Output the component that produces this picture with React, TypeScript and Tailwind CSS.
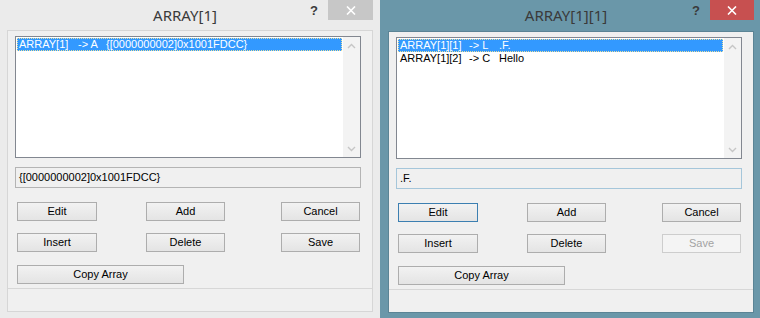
import React from 'react';

type Item = { name: string; kind: string; value: string };

type WinProps = {
  title: string;
  active?: boolean;
  items: Item[];
  field: string;
  nameW: string;
  kindW: string;
};

function Chevron({ up }: { up?: boolean }) {
  return (
    <svg width="9" height="6" viewBox="0 0 9 6" className="block">
      <polyline
        points={up ? '1,5 4.5,1.5 8,5' : '1,1 4.5,4.5 8,1'}
        fill="none"
        stroke="#c6c6c6"
        strokeWidth="1.4"
      />
    </svg>
  );
}

function Btn({
  label,
  className,
  isDefault,
  disabled,
}: {
  label: string;
  className: string;
  isDefault?: boolean;
  disabled?: boolean;
}) {
  const tone = disabled
    ? 'border-[#cdcdcd] bg-[#f4f4f4] text-[#a3a3a3]'
    : isDefault
      ? 'border-[#3c7fb1] bg-linear-to-b from-[#f2f2f2] to-[#e4e4e4] text-black'
      : 'border-[#adadad] bg-linear-to-b from-[#f2f2f2] to-[#e4e4e4] text-black';
  return (
    <div
      className={`h-[19px] shrink-0 flex items-center justify-center border text-[11px] leading-none ${tone} ${className}`}
    >
      {label}
    </div>
  );
}

function Win({ title, active, items, field, nameW, kindW }: WinProps) {
  return (
    <div
      className={
        active
          ? 'w-[380px] h-[318px] bg-[#6a97a9] flex flex-col pl-[8px] pr-[6px]'
          : 'w-[380px] h-[318px] bg-[#ebebeb] flex flex-col pl-[7px] pr-[7px]'
      }
    >
      {/* title bar */}
      <div
        className={
          active
            ? 'h-[31px] grid grid-cols-[1fr_auto_1fr] items-start'
            : 'h-[30px] grid grid-cols-[1fr_auto_1fr] items-start'
        }
      >
        <div />
        <div className="pt-[5px] pr-[10px] text-[15px] leading-[20px] text-[#3a3a3a] font-['Noto_Sans',sans-serif]">
          {title}
        </div>
        <div className="flex justify-end items-start">
          <span className="mt-[3px] mr-[10px] text-[13px] leading-[16px] font-bold text-[#3a3a3a] font-['Liberation_Sans',Arial,sans-serif]">
            ?
          </span>
          <div
            className={
              active
                ? 'w-[44px] h-[20px] bg-[#c75050] flex items-center justify-center'
                : 'w-[45px] h-[20px] bg-[#c7c7c7] flex items-center justify-center'
            }
          >
            <svg width="10" height="9" viewBox="0 0 10 9">
              <path d="M1 0.5 L9 8.5 M9 0.5 L1 8.5" stroke="#ffffff" strokeWidth="1.6" />
            </svg>
          </div>
        </div>
      </div>

      {/* client area */}
      <div
        className={
          active
            ? "h-[282px] bg-[#f0f0f0] border border-[#5b8495] flex flex-col font-['Liberation_Sans',Arial,sans-serif] text-[11px]"
            : "h-[282px] bg-[#f0f0f0] border border-[#d6d6d6] flex flex-col font-['Liberation_Sans',Arial,sans-serif] text-[11px]"
        }
      >
        {/* list box */}
        <div className="ml-[7px] mt-[5px] w-[346px] h-[122px] shrink-0 border border-[#828790] bg-white flex">
          <div className="flex-1 px-px pt-px">
            {items.map((it, i) => (
              <div
                key={it.name}
                className={
                  i === 0
                    ? 'h-[13px] leading-[13px] pl-[2px] bg-[#3399ff] text-white whitespace-pre flex outline-1 outline-dotted outline-offset-[-1px] outline-[#e8e0a0]'
                    : 'h-[13px] leading-[13px] pl-[2px] text-black whitespace-pre flex'
                }
              >
                <span className={`inline-block ${nameW}`}>{it.name}</span>
                <span className={`inline-block ${kindW}`}>-&gt; {it.kind}</span>
                <span>{it.value}</span>
              </div>
            ))}
          </div>
          <div className="w-[17px] bg-[#f3f3f3] flex flex-col justify-between">
            <div className="h-[17px] flex items-center justify-center">
              <Chevron up />
            </div>
            <div className="h-[17px] flex items-center justify-center">
              <Chevron />
            </div>
          </div>
        </div>

        {/* text field */}
        <div
          className={
            active
              ? 'ml-[7px] mt-[9px] w-[346px] h-[21px] shrink-0 border border-[#a5c6da] bg-[#f0f0f0] pl-[3px] flex items-center text-black'
              : 'ml-[7px] mt-[9px] w-[346px] h-[21px] shrink-0 border border-[#b4b4b4] bg-[#f0f0f0] pl-[3px] flex items-center text-black'
          }
        >
          {field}
        </div>

        {/* button rows */}
        <div className="mt-[14px] pl-[9px] flex">
          <Btn label="Edit" className="w-[80px]" isDefault={active} />
          <Btn label="Add" className="w-[79px] ml-[49px]" />
          <Btn label="Cancel" className="w-[79px] ml-[56px]" />
        </div>
        <div className="mt-[12px] pl-[9px] flex">
          <Btn label="Insert" className="w-[80px]" />
          <Btn label="Delete" className="w-[79px] ml-[49px]" />
          <Btn label="Save" className="w-[79px] ml-[56px]" disabled={active} />
        </div>
        <div className="mt-[13px] pl-[9px] flex">
          <Btn label="Copy Array" className="w-[167px]" />
        </div>

        {/* status bar */}
        <div className="mt-auto h-[23px] border-t border-[#d7d7d7]" />
      </div>
    </div>
  );
}

export default function App() {
  return (
    <div className="w-[760px] h-[318px] flex overflow-hidden">
      <Win
        title="ARRAY[1]"
        items={[{ name: 'ARRAY[1]', kind: 'A', value: '{[0000000002]0x1001FDCC}' }]}
        field="{[0000000002]0x1001FDCC}"
        nameW="w-[59px]"
        kindW="w-[28px]"
      />
      <Win
        title="ARRAY[1][1]"
        active
        items={[
          { name: 'ARRAY[1][1]', kind: 'L', value: '.F.' },
          { name: 'ARRAY[1][2]', kind: 'C', value: 'Hello' },
        ]}
        field=".F."
        nameW="w-[69px]"
        kindW="w-[30px]"
      />
    </div>
  );
}
